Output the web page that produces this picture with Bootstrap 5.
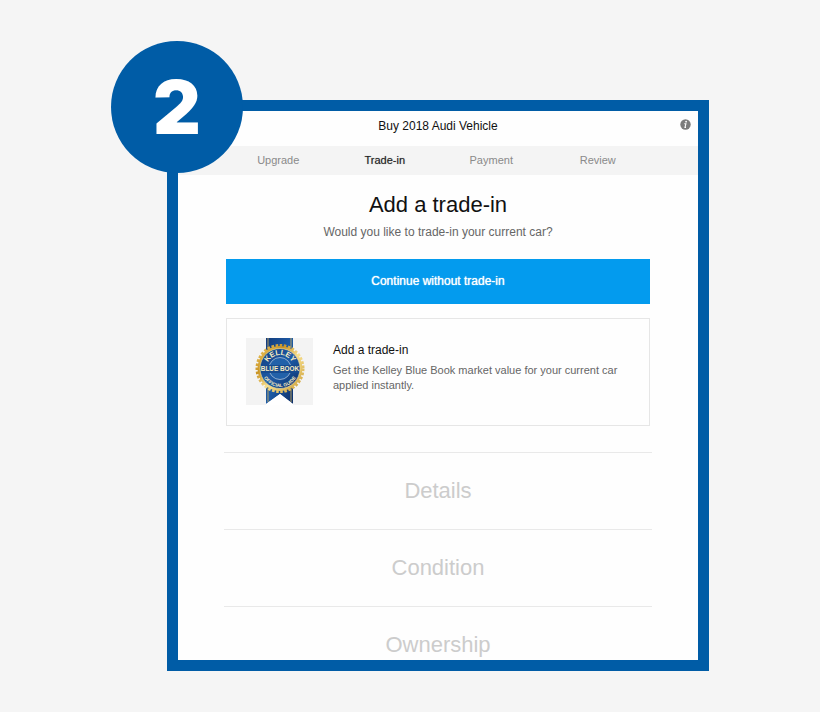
<!DOCTYPE html>
<html lang="en">
<head>
<meta charset="utf-8">
<meta name="viewport" content="width=device-width, initial-scale=1">
<title>Buy 2018 Audi Vehicle</title>
<link href="https://cdn.jsdelivr.net/npm/bootstrap@5.3.0/dist/css/bootstrap.min.css" rel="stylesheet">
<style>
  body { background: #f5f5f5; color: #111; font-family: "Liberation Sans", Arial, sans-serif; font-size: 12px; }
  .stage { max-width: 598px; padding: 100px 0 41px 56px; }
  .step-number { top: 41px; left: 0; width: 132px; height: 132px; background: #005ca6; color: #fff; font-family: Inter, sans-serif; font-weight: 900; font-size: 74px; line-height: 74px; }
  .frame { background: #fefefe; border: 11px solid #005ca6; }
  .title-bar { padding: 8px 7px; min-height: 35px; }
  .title-bar h1 { font-size: 12px; line-height: 15px; }
  .info-btn { width: 11px; height: 11px; }
  .steps { background: #f4f4f4; padding: 0 47px; font-size: 11px; line-height: 29px; }
  .steps a { color: #8a8a8a; }
  .steps a.current { color: #222; text-shadow: 0 0 1px #999; }
  .offer { padding: 17px 48px 26px; }
  .section-title { font-size: 22px; line-height: 26px; font-weight: 400; }
  .question { color: #666; margin: 5px 0 18px; line-height: 18px; }
  .btn-skip, .btn-skip:hover { background: #039bee; color: #fff; font-size: 12px; line-height: 17px; padding: 14px; text-shadow: 0 0 1px #fff; }
  .trade-option { color: #111; background: #fefefe; border: 1px solid #e6e6e6; padding: 19px 19px 20px; margin-top: 14px; gap: 20px; }
  .trade-text { padding-top: 4px; }
  .trade-name { line-height: 16px; margin-bottom: 5px; }
  .trade-note { color: #666; font-size: 11px; line-height: 15px; }
  .later { padding: 0 46px; }
  .later h2 { color: #ccc; border-top: 1px solid #e9e9e9; padding: 25px 0; }
  .later h2:last-child { padding-bottom: 2px; }
</style>
</head>
<body>
<main class="stage mx-auto position-relative">
  <div class="step-number position-absolute rounded-circle d-flex align-items-center justify-content-center">2</div>
  <div class="frame">
    <header class="title-bar d-flex justify-content-between align-items-start">
      <span class="info-btn"></span>
      <h1 class="m-0 fw-normal">Buy 2018 Audi Vehicle</h1>
      <button type="button" class="info-btn btn p-0 border-0 d-flex" aria-label="Information">
        <svg width="11" height="11" viewBox="0 0 11 11" aria-hidden="true"><circle cx="5.5" cy="5.5" r="5.2" fill="#7c7c7c"/><circle cx="6.1" cy="2.7" r=".9" fill="#fff"/><path d="M4.3 4.7h1.6L5 8.4h1" fill="none" stroke="#fff" stroke-width="1.1"/></svg>
      </button>
    </header>
    <nav class="steps d-flex text-center" aria-label="Purchase steps">
      <a class="col text-decoration-none" href="#upgrade">Upgrade</a>
      <a class="col text-decoration-none current" href="#trade" aria-current="step">Trade-in</a>
      <a class="col text-decoration-none" href="#payment">Payment</a>
      <a class="col text-decoration-none" href="#review">Review</a>
    </nav>
    <section class="offer text-center" id="trade">
      <h2 class="section-title m-0">Add a trade-in</h2>
      <p class="question">Would you like to trade-in your current car?</p>
      <button type="button" class="btn btn-skip w-100 rounded-0 border-0 d-block">Continue without trade-in</button>
      <a href="#details" class="trade-option d-flex align-items-start text-start text-decoration-none">
        <svg class="flex-shrink-0" width="67" height="67" viewBox="0 0 67 67" role="img" aria-label="Kelley Blue Book Official Guide">
          <defs>
            <linearGradient id="blue" x1="0" y1="0" x2="1" y2="1"><stop offset="0" stop-color="#123b7c"/><stop offset=".5" stop-color="#1d5ba6"/><stop offset="1" stop-color="#0d2f68"/></linearGradient>
            <linearGradient id="gold" x1="0" y1="0" x2="1" y2="1"><stop offset="0" stop-color="#f0cd68"/><stop offset=".3" stop-color="#c99425"/><stop offset=".55" stop-color="#f8e08f"/><stop offset="1" stop-color="#c99a31"/></linearGradient>
            <path id="arcTop" d="M20.5 30.5a13.5 13.5 0 0 1 27 0"/>
            <path id="arcBottom" d="M15.5 30.5a18.5 18.5 0 0 0 37 0"/>
          </defs>
          <path fill="#f3f3f3" d="M0 0h67v67H0z"/>
          <path fill="url(#blue)" d="M20 0h27v66L34 56 20 66z"/>
          <path fill="#fff" d="M34 56l13 10v1H20v-1z"/>
          <path d="M22 0v64M45 0v64" stroke="#d5b45f" stroke-width=".8"/>
          <circle cx="34" cy="30.5" r="22.5" fill="url(#gold)"/>
          <circle cx="34" cy="30.5" r="23" fill="none" stroke="url(#gold)" stroke-width="3" stroke-dasharray="2.6 1.53"/>
          <circle cx="34" cy="30.5" r="20" fill="url(#blue)" stroke="#f9e7a6" stroke-width=".6"/>
          <circle cx="34" cy="30.5" r="11" fill="#2261a9" stroke="#a9bfd8" stroke-width=".8"/>
          <path fill="#174b8f" d="M15 27h38v8H15z"/>
          <g fill="#f7ecc2" font-family="Liberation Sans, Arial, sans-serif" font-weight="700" text-anchor="middle">
            <text font-size="7.5"><textPath href="#arcTop" startOffset="50%">KELLEY</textPath></text>
            <text font-size="6.4" x="34" y="33">BLUE BOOK</text>
            <text font-size="4.8"><textPath href="#arcBottom" startOffset="50%">OFFICIAL GUIDE</textPath></text>
          </g>
        </svg>
        <div class="trade-text">
          <div class="trade-name">Add a trade-in</div>
          <div class="trade-note">Get the Kelley Blue Book market value for your current car applied instantly.</div>
        </div>
      </a>
    </section>
    <section class="later text-center">
      <h2 class="section-title m-0" id="details">Details</h2>
      <h2 class="section-title m-0">Condition</h2>
      <h2 class="section-title m-0">Ownership</h2>
    </section>
  </div>
</main>
<script src="https://cdn.jsdelivr.net/npm/bootstrap@5.3.0/dist/js/bootstrap.bundle.min.js"></script>
</body>
</html>
